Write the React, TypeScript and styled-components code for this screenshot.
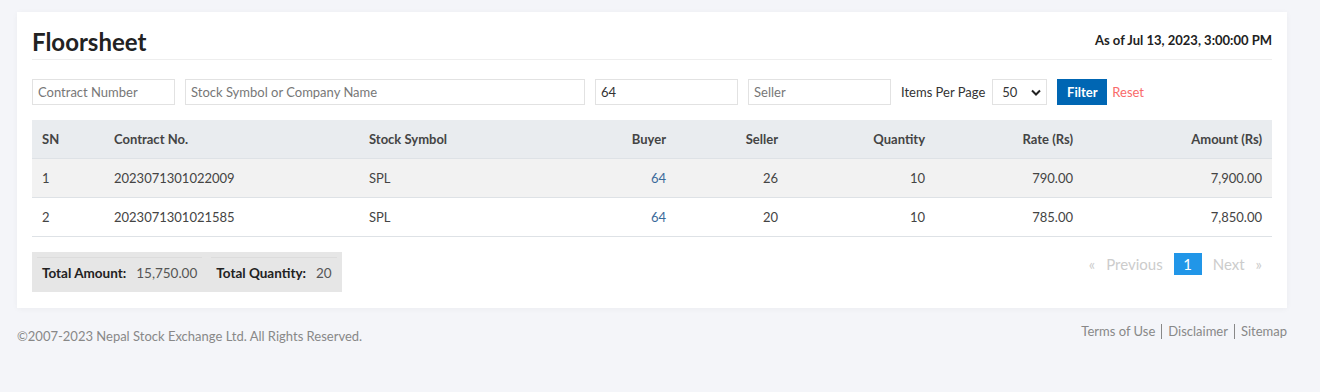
import styled, { createGlobalStyle } from "styled-components";

const GlobalStyle = createGlobalStyle`
    body{
        margin:0;
        background:#f4f5f9;
        font-family: Lato, "Noto Sans", sans-serif;
        color:#333;
    }
`

interface Trade {
    sn: number;
    contract: string;
    symbol: string;
    buyer: number;
    seller: number;
    qty: number;
    rate: string;
    amount: string;
}

const trades: Trade[] = [
    {sn:1, contract:"2023071301022009", symbol:"SPL", buyer:64, seller:26, qty:10, rate:"790.00", amount:"7,900.00"},
    {sn:2, contract:"2023071301021585", symbol:"SPL", buyer:64, seller:20, qty:10, rate:"785.00", amount:"7,850.00"},
]

const columns = [
    {label:"SN", width:72, right:false},
    {label:"Contract No.", width:255, right:false},
    {label:"Stock Symbol", width:200, right:false},
    {label:"Buyer", width:117, right:true},
    {label:"Seller", width:112, right:true},
    {label:"Quantity", width:147, right:true},
    {label:"Rate (Rs)", width:148, right:true},
    {label:"Amount (Rs)", width:189, right:true},
]

function App(){
    return (
        <Page>
            <GlobalStyle/>
            <Card>
                <Heading>
                    <Title>Floorsheet</Title>
                    <AsOf>As of Jul 13, 2023, 3:00:00 PM</AsOf>
                </Heading>
                <Filters>
                    <Field $w={143} placeholder="Contract Number"/>
                    <Field $w={400} placeholder="Stock Symbol or Company Name"/>
                    <Field $w={143} defaultValue="64"/>
                    <Field $w={143} placeholder="Seller"/>
                    <PerPage>Items Per Page</PerPage>
                    <Select>
                        <span>50</span>
                        <svg width="10" height="7" viewBox="0 0 10 7"><path d="M1 1.5l4 4 4-4" fill="none" stroke="#222" strokeWidth="2"/></svg>
                    </Select>
                    <FilterBtn>Filter</FilterBtn>
                    <ResetLink>Reset</ResetLink>
                </Filters>
                <Table>
                    <colgroup>
                        {columns.map(c => <col key={c.label} style={{width:c.width}}/>)}
                    </colgroup>
                    <thead>
                        <tr>
                            {columns.map(c => <Th key={c.label} $right={c.right}>{c.label}</Th>)}
                        </tr>
                    </thead>
                    <tbody>
                        {trades.map((t, i) => (
                            <Row key={t.sn} $striped={i % 2 === 0}>
                                <Td>{t.sn}</Td>
                                <Td>{t.contract}</Td>
                                <Td>{t.symbol}</Td>
                                <Td $right $link>{t.buyer}</Td>
                                <Td $right>{t.seller}</Td>
                                <Td $right>{t.qty}</Td>
                                <Td $right>{t.rate}</Td>
                                <Td $right>{t.amount}</Td>
                            </Row>
                        ))}
                    </tbody>
                </Table>
                <Bottom>
                    <Totals>
                        <TotalCell><b>Total Amount:</b><span>15,750.00</span></TotalCell>
                        <TotalCell><b>Total Quantity:</b><span>20</span></TotalCell>
                    </Totals>
                    <Pager>
                        <PageLink>«</PageLink>
                        <PageLink>Previous</PageLink>
                        <PageNum>1</PageNum>
                        <PageLink>Next</PageLink>
                        <PageLink>»</PageLink>
                    </Pager>
                </Bottom>
            </Card>
            <Footer>
                <Copy>©2007-2023 Nepal Stock Exchange Ltd. All Rights Reserved.</Copy>
                <Links>
                    <FootLink>Terms of Use</FootLink>
                    <FootLink>Disclaimer</FootLink>
                    <FootLink>Sitemap</FootLink>
                </Links>
            </Footer>
        </Page>
    )
}

const Page = styled.div`
    width:1270px;
    padding:12px 33px 0 17px;
`
const Card = styled.div`
    background:#fff;
    padding:15px 15px 16px;
    box-shadow:0 1px 6px rgba(0,0,0,0.04);
`
const Heading = styled.div`
    display:flex;
    justify-content:space-between;
    align-items:center;
    height:32px;
    border-bottom:1px solid #eee;
`
const Title = styled.h1`
    margin:0;
    font-size:24px;
    font-weight:bold;
    color:#222;
    position:relative;
    top:-2px;
`
const AsOf = styled.div`
    font-size:13px;
    font-weight:bold;
    color:#222;
    position:relative;
    top:-3px;
`
const Filters = styled.div`
    display:flex;
    align-items:center;
    gap:10px;
    margin-top:19px;
`
const Field = styled.input<{$w:number}>`
    width:${p => p.$w}px;
    height:26px;
    box-sizing:border-box;
    border:1px solid #e2e2e2;
    padding:0 5px;
    font-family:inherit;
    font-size:13px;
    color:#333;
    outline:none;
    &::placeholder{ color:#777; }
`
const PerPage = styled.span`
    font-size:13px;
    color:#333;
    margin-right:-3px;
`
const Select = styled.div`
    width:55px;
    height:26px;
    box-sizing:border-box;
    border:1px solid #e2e2e2;
    display:flex;
    align-items:center;
    justify-content:space-between;
    padding:0 5px 0 9px;
    font-size:13px;
`
const FilterBtn = styled.button`
    height:26px;
    width:50px;
    border:none;
    background:#0066b3;
    color:#fff;
    font-family:inherit;
    font-size:13px;
    font-weight:bold;
`
const ResetLink = styled.span`
    font-size:13px;
    color:#f96a6a;
    margin-left:-5px;
`
const Table = styled.table`
    width:1240px;
    margin-top:15px;
    border-collapse:collapse;
    table-layout:fixed;
    font-size:13px;
`
const Th = styled.th<{$right?:boolean}>`
    height:38px;
    box-sizing:border-box;
    background:#e9ecef;
    border-bottom:1px solid #dee2e6;
    padding:0 10px;
    font-weight:bold;
    color:#444;
    text-align:${p => p.$right ? "right" : "left"};
`
const Row = styled.tr<{$striped:boolean}>`
    background:${p => p.$striped ? "#f2f2f2" : "#fff"};
`
const Td = styled.td<{$right?:boolean; $link?:boolean}>`
    height:39px;
    box-sizing:border-box;
    border-bottom:1px solid #dee2e6;
    padding:0 10px;
    color:${p => p.$link ? "#3a6a9a" : "#444"};
    text-align:${p => p.$right ? "right" : "left"};
`
const Bottom = styled.div`
    display:flex;
    justify-content:space-between;
    align-items:flex-start;
    margin-top:15px;
`
const Totals = styled.div`
    display:flex;
    gap:9px;
    background:#e6e6e6;
    padding:5px 5px 0;
    height:40px;
    box-sizing:border-box;
`
const TotalCell = styled.div`
    display:flex;
    gap:10px;
    align-items:center;
    border-top:1px solid #dcdcdc;
    padding:0 5px;
    height:30px;
    font-size:13.5px;
    b{ color:#222; }
    span{ color:#555; }
`
const Pager = styled.div`
    display:flex;
    align-items:center;
    gap:11px;
    margin-top:1px;
    padding-right:10px;
`
const PageLink = styled.span`
    font-size:15px;
    color:#ccc;
`
const PageNum = styled.span`
    width:28px;
    height:22px;
    background:#2196e8;
    color:#fff;
    font-size:15px;
    display:flex;
    align-items:center;
    justify-content:center;
`
const Footer = styled.div`
    display:flex;
    justify-content:space-between;
    margin-top:16px;
    font-size:13px;
    color:#888;
`
const Copy = styled.span`
    margin-top:4px;
`
const Links = styled.div`
    display:flex;
`
const FootLink = styled.span`
    padding:0 6px;
    border-left:1px solid #888;
    line-height:14px;
    height:15px;
    &:first-child{ border-left:none; }
    &:last-child{ padding-right:0; }
`

export default App
